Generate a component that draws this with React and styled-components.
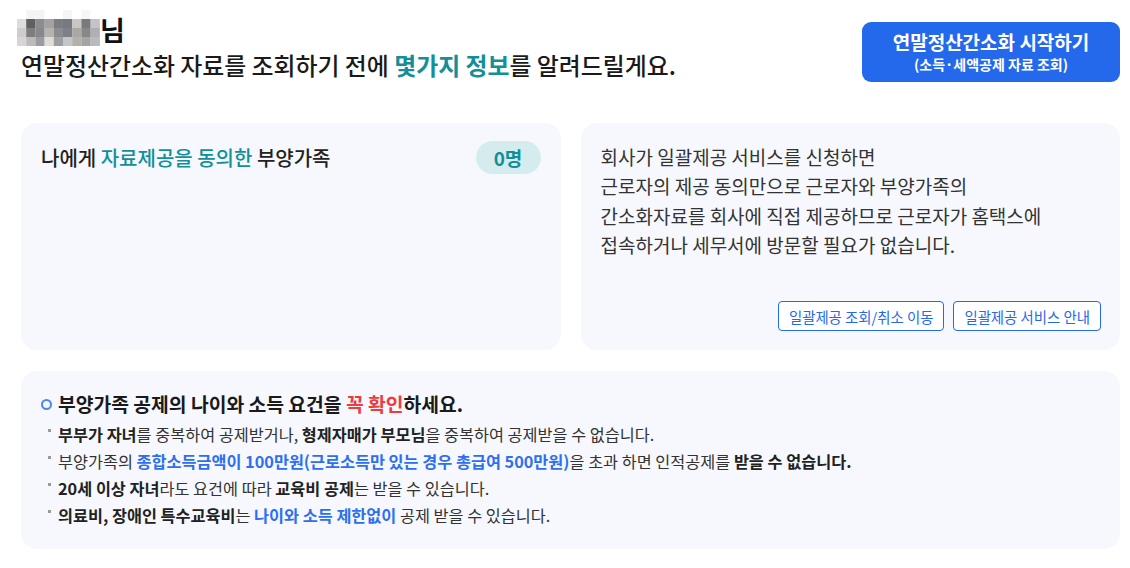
import React from 'react'
import styled, { createGlobalStyle } from 'styled-components'

const blue = '#2469eb'
const teal = '#138f98'
const cardBg = '#f6f8fd'

const GlobalStyle = createGlobalStyle`
  html, body {
    margin: 0;
    padding: 0;
    background: #ffffff;
  }
  body {
    font-family: "Noto Sans CJK KR", "Noto Sans", sans-serif;
    color: #222;
  }
`

const Page = styled.div`
  width: 1130px;
  box-sizing: border-box;
  padding: 14px 10px 0 21px;
`

const Header = styled.header`
  display: flex;
  justify-content: space-between;
  align-items: flex-start;
`

const Greeting = styled.div`
  display: flex;
  flex-direction: column;
`

const NameRow = styled.div`
  display: flex;
  align-items: flex-end;
  height: 32px;
  margin-left: -4px;
`

const NameSuffix = styled.span`
  font-size: 27px;
  font-weight: 700;
  line-height: 32px;
  color: #111;
`

const Subtitle = styled.h1`
  margin: 3px 0 0;
  font-size: 23.9px;
  font-weight: 500;
  line-height: 32px;
  color: #1a1a1a;
`

const Accent = styled.span`
  color: ${p => p.$color || teal};
  font-weight: ${p => p.$weight || 'inherit'};
`

const Strong = styled.b`
  font-weight: 700;
  color: #222;
`

const StartButton = styled.button`
  margin-top: 8px;
  width: 258px;
  height: 60px;
  padding: 0;
  border: none;
  border-radius: 9px;
  background: ${blue};
  color: #fff;
  font-family: inherit;
  display: flex;
  flex-direction: column;
  align-items: center;
  justify-content: center;
  gap: 3px;
  cursor: pointer;
`

const StartMain = styled.span`
  font-size: 19px;
  font-weight: 700;
  line-height: 22px;
`

const StartSub = styled.span`
  font-size: 14px;
  font-weight: 700;
  line-height: 17px;
`

const CardRow = styled.div`
  display: grid;
  grid-template-columns: 1fr 1fr;
  gap: 20px;
  margin-top: 41px;
`

const Card = styled.section`
  background: ${cardBg};
  border-radius: 16px;
  box-sizing: border-box;
  min-height: ${p => p.$height || 'auto'};
  padding: ${p => p.$padding || '18px 20px'};
  display: flex;
  flex-direction: column;
`

const ConsentRow = styled.div`
  display: flex;
  justify-content: space-between;
  align-items: center;
`

const ConsentTitle = styled.h2`
  margin: 0;
  font-size: 20px;
  font-weight: 500;
  color: #222;
`

const CountBadge = styled.span`
  width: 65px;
  height: 33px;
  border-radius: 17px;
  background: #d5ecef;
  color: ${teal};
  font-size: 19px;
  font-weight: 700;
  display: flex;
  align-items: center;
  justify-content: center;
`

const InfoText = styled.p`
  margin: 0;
  font-size: 19px;
  line-height: 29.4px;
  color: #333;
`

const ButtonRow = styled.div`
  margin-top: auto;
  display: flex;
  justify-content: flex-end;
  gap: 9px;
`

const OutlineButton = styled.button`
  height: 30px;
  padding: 0 10px;
  border: 1px solid ${blue};
  border-radius: 4px;
  background: #fff;
  color: ${blue};
  font-family: inherit;
  font-size: 14.4px;
  cursor: pointer;
`

const NoticeCard = styled.section`
  margin-top: 21px;
  background: ${cardBg};
  border-radius: 16px;
  height: 178px;
  box-sizing: border-box;
  padding: 20px 20px 0 20px;
`

const NoticeTitle = styled.h3`
  margin: 0;
  display: flex;
  align-items: center;
  gap: 6px;
  font-size: 19.3px;
  font-weight: 700;
  line-height: 26px;
  color: #1a1a1a;
`

const Ring = styled.span`
  width: 11px;
  height: 11px;
  box-sizing: border-box;
  border: 2.5px solid #4c84f0;
  border-radius: 50%;
  flex: none;
`

const NoticeList = styled.ul`
  margin: 4px 0 0;
  padding: 0 0 0 7px;
  list-style: none;
`

const NoticeItem = styled.li`
  position: relative;
  padding-left: 10px;
  font-size: 16.3px;
  line-height: 27px;
  color: #333;

  &::before {
    content: '';
    position: absolute;
    left: 0;
    top: 8px;
    width: 3px;
    height: 3px;
    background: #9a9a9a;
  }
`

const mosaic = [
  ['#ffffff', '#f4f4f4', '#f4f4f4', '#ffffff', '#ffffff', '#f5f5f5', '#ffffff', '#f6f6f6', '#ffffff'],
  ['#dedcda', '#5f5f61', '#8a8c90', '#a4a3a2', '#7c7d80', '#777b81', '#c9c6c3', '#7a7a7c', '#c4c4c8'],
  ['#cfccca', '#7e7e80', '#86888e', '#b7b4b0', '#8c8c90', '#7e8088', '#aaa7a4', '#888888', '#b0b0b4'],
  ['#d8d6d4', '#bdbcbd', '#9a9ca0', '#e0dcd8', '#9c9ea2', '#c4c6ca', '#b4b0ac', '#a6a4a2', '#b8bac0'],
]

const BlurredName = () => (
  <svg width="83" height="36" viewBox="0 0 83 36" aria-hidden="true">
    {mosaic.map((row, r) =>
      row.map((c, i) => (
        <rect key={`${r}-${i}`} x={i * 9.2} y={r * 9} width="9.3" height="9.1" fill={c} />
      ))
    )}
  </svg>
)

const App = () => {
  return (
    <Page>
      <GlobalStyle />
      <Header>
        <Greeting>
          <NameRow>
            <BlurredName />
            <NameSuffix>님</NameSuffix>
          </NameRow>
          <Subtitle>
            연말정산간소화 자료를 조회하기 전에 <Accent $weight={700}>몇가지 정보</Accent>를 알려드릴게요.
          </Subtitle>
        </Greeting>
        <StartButton>
          <StartMain>연말정산간소화 시작하기</StartMain>
          <StartSub>(소득·세액공제 자료 조회)</StartSub>
        </StartButton>
      </Header>

      <CardRow>
        <Card $height="227px">
          <ConsentRow>
            <ConsentTitle>
              나에게 <Accent>자료제공을 동의한</Accent> 부양가족
            </ConsentTitle>
            <CountBadge>0명</CountBadge>
          </ConsentRow>
        </Card>

        <Card $height="227px" $padding="19px 19px 19px 20px">
          <InfoText>
            회사가 일괄제공 서비스를 신청하면<br />
            근로자의 제공 동의만으로 근로자와 부양가족의<br />
            간소화자료를 회사에 직접 제공하므로 근로자가 홈택스에<br />
            접속하거나 세무서에 방문할 필요가 없습니다.
          </InfoText>
          <ButtonRow>
            <OutlineButton>일괄제공 조회/취소 이동</OutlineButton>
            <OutlineButton>일괄제공 서비스 안내</OutlineButton>
          </ButtonRow>
        </Card>
      </CardRow>

      <NoticeCard>
        <NoticeTitle>
          <Ring />
          <span>
            부양가족 공제의 나이와 소득 요건을 <Accent $color="#f03a3e">꼭 확인</Accent>하세요.
          </span>
        </NoticeTitle>
        <NoticeList>
          <NoticeItem>
            <Strong>부부가 자녀</Strong>를 중복하여 공제받거나, <Strong>형제자매가 부모님</Strong>을 중복하여 공제받을 수 없습니다.
          </NoticeItem>
          <NoticeItem>
            부양가족의 <Accent $color="#2d6ff0" $weight={700}>종합소득금액이 100만원(근로소득만 있는 경우 총급여 500만원)</Accent>을 초과 하면 인적공제를 <Strong>받을 수 없습니다.</Strong>
          </NoticeItem>
          <NoticeItem>
            <Strong>20세 이상 자녀</Strong>라도 요건에 따라 <Strong>교육비 공제</Strong>는 받을 수 있습니다.
          </NoticeItem>
          <NoticeItem>
            <Strong>의료비, 장애인 특수교육비</Strong>는 <Accent $color="#2d6ff0" $weight={700}>나이와 소득 제한없이</Accent> 공제 받을 수 있습니다.
          </NoticeItem>
        </NoticeList>
      </NoticeCard>
    </Page>
  )
}

export default App
